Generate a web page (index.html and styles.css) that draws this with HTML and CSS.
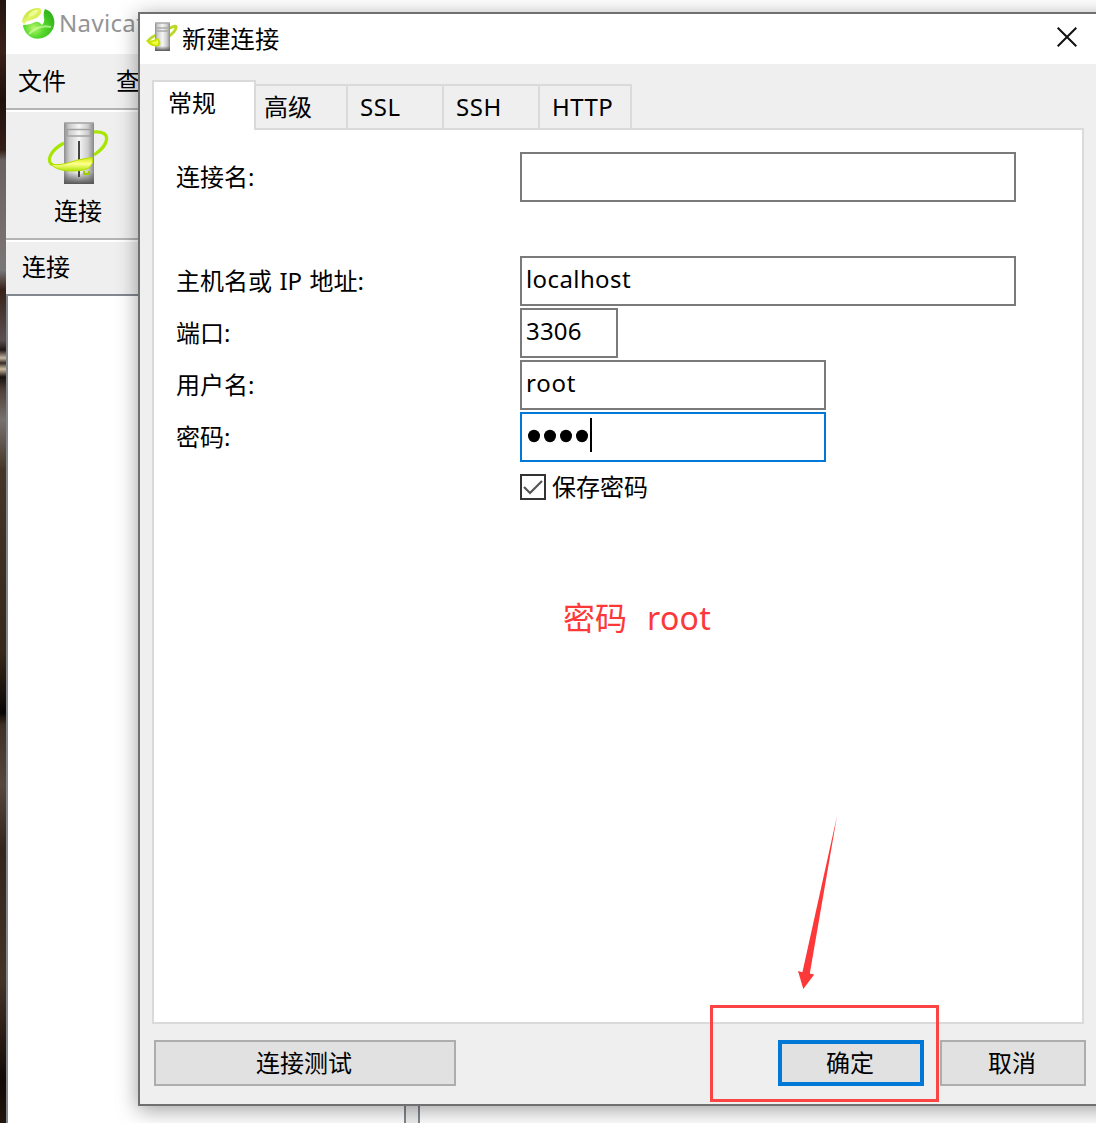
FILE: index.html
```html
<!DOCTYPE html>
<html lang="zh-CN">
<head>
<meta charset="utf-8">
<title>新建连接</title>
<link rel="stylesheet" href="styles.css">
</head>
<body>
<div class="desktop">
  <div class="wallpaper"></div>
  <main class="main-window">
    <header class="main-title">
      <svg width="34" height="34" viewBox="0 0 34 34">
        <defs>
          <radialGradient id="leaf" cx=".35" cy=".65" r=".7"><stop offset="0" stop-color="#b9f56a"/><stop offset=".45" stop-color="#55d92c"/><stop offset="1" stop-color="#32b41c"/></radialGradient>
          <linearGradient id="lime" x2="1" y2="1"><stop stop-color="#a4d60b"/><stop offset=".5" stop-color="#e4f56a"/><stop offset="1" stop-color="#b5e315"/></linearGradient>
        </defs>
        <path d="M1 16C2 8 9 1 19 2q2 2 1 5Q18 12 10 14 5 15 3 18Z" fill="url(#lime)"/>
        <path d="M24 3C34 6 36 19 30 26 24 34 12 35 6 28Q2 23 2 19q7 0 12-3 4-1 7 3 3-3 2-7-1-5 1-9Z" fill="url(#leaf)"/>
        <path d="M8 28q10-10 22-7" fill="none" stroke="#d9ffb0" stroke-width="2.2" opacity=".6"/>
        <path d="M8 8q5-5 9-4-1 5-9 7Z" fill="#f4ffad" opacity=".7"/>
      </svg>
      <span>Navicat</span>
    </header>
    <nav class="menu"><span>文件</span><span>查看</span></nav>
    <section class="toolbar">
      <div class="tool">
        <svg width="64" height="64" viewBox="0 0 64 64">
          <defs>
            <linearGradient id="metal"><stop stop-color="#8d8d8d"/><stop offset=".17" stop-color="#ccc"/><stop offset=".5" stop-color="#f5f5f5"/><stop offset=".8" stop-color="#ccc"/><stop offset="1" stop-color="#888"/></linearGradient>
            <linearGradient id="foot" x2="0" y2="1"><stop stop-color="#555" stop-opacity="0"/><stop offset="1" stop-color="#555"/></linearGradient>
            <linearGradient id="band" x2="0" y2="1"><stop stop-color="#d2e900"/><stop offset=".5" stop-color="#ffff91"/><stop offset="1" stop-color="#aee400"/></linearGradient>
          </defs>
          <path d="M46 10C66 8 62 23 47 33M17 21C2 29-1 40 6 43" fill="none" stroke="#a7e600" stroke-width="3.2"/>
          <path d="M17 1h30v61H17Z" fill="url(#metal)"/>
          <path d="M17 50h30v12H17Z" fill="url(#foot)"/>
          <path d="M17 1h30M20 7.5h24M20 14h24M20 7v7M44 7v7" stroke="#a2a2a2" stroke-width="1.6"/>
          <path d="M32 19v36" stroke="#444" stroke-width="2"/>
          <path d="M4 42q8 2 20-2 5-2 12-3 6-1 9-2 2 6-2 10-4 4-18 4Q9 49 4 42" fill="url(#band)" stroke="#b1df00"/>
          <path d="M37 49v3h5v-3M42 51v2" fill="none" stroke="#9ccc00" stroke-width="2"/>
        </svg>
        <span>连接</span>
      </div>
    </section>
    <section class="side-heading">连接</section>
    <section class="panes"><div class="tree"></div><div class="splitter"></div><div class="content"></div></section>
  </main>

  <section class="dialog">
    <header class="dialog-title">
      <svg width="32" height="32" viewBox="0 0 32 32">
        <path d="M22 7q9-5 8-1-1 4-8 9M10 13q-8 4-8 7" fill="none" stroke="#bcd829" stroke-width="3"/>
        <path d="M9 1h15v28H9Z" fill="url(#metal)"/><path d="M9 24h15v5H9Z" fill="url(#foot)"/>
        <path d="M9 1h15M11 6h11M11 9h11" stroke="#aaa" stroke-width="1.3"/>
        <path d="M0 18q6 2 11-2l2 1q3 5 0 7-9 2-13-6" fill="#c9e200"/><path d="M5 20q4 0 7-2 1 5-2 5-3 0-5-3" fill="#f2fb3c"/>
      </svg>
      <h1>新建连接</h1>
      <svg class="close" width="20" height="20" viewBox="0 0 20 20"><path d="M.7.7 19.3 19.3M19.3.7.7 19.3" stroke="#111" stroke-width="2"/></svg>
    </header>
    <div class="dialog-body">
      <nav class="tabs">
        <span class="tab active">常规</span><span class="tab advanced">高级</span><span class="tab">SSL</span><span class="tab">SSH</span><span class="tab http">HTTP</span>
      </nav>
      <div class="panel">
        <div class="row name-row"><span class="label">连接名:</span><div class="field"></div></div>
        <div class="row"><span class="label host">主机名或 IP 地址:</span><div class="field">localhost</div></div>
        <div class="row"><span class="label">端口:</span><div class="field port">3306</div></div>
        <div class="row"><span class="label">用户名:</span><div class="field medium">root</div></div>
        <div class="row"><span class="label">密码:</span><div class="field medium focused"><svg width="64" height="14" viewBox="0 0 64 14"><g fill="#000"><ellipse cx="8" cy="7" rx="6" ry="6.2"/><ellipse cx="24" cy="7" rx="6" ry="6.2"/><ellipse cx="40" cy="7" rx="6" ry="6.2"/><ellipse cx="56" cy="7" rx="6" ry="6.2"/></g></svg><i class="caret"></i></div></div>
        <div class="save"><span class="checkbox"><svg width="22" height="22" viewBox="0 0 22 22"><path d="m2 11 6 6L20 5" fill="none" stroke="#555" stroke-width="2.2"/></svg></span><span>保存密码</span></div>
      </div>
      <footer class="actions"><span class="button test">连接测试</span><span class="button ok">确定</span><span class="button">取消</span></footer>
    </div>
  </section>

  <div class="note"><span>密码</span><span class="note-value">root</span></div>
  <svg class="arrow" width="64" height="180" viewBox="0 0 64 180"><path d="M57 6 29.8 163.4l4.4 1.2L23.3 179 18 161l4.4 1.3Z" fill="#fd3838"/></svg>
  <div class="highlight"></div>
</div>
</body>
</html>
```
FILE: styles.css
```css
* { box-sizing: border-box; }
body { margin: 0; overflow: hidden; color: #000; font: 24px/32px "Noto Sans", "Noto Sans CJK SC", sans-serif; }
svg { display: block; flex: none; }
.desktop { position: relative; width: 1096px; height: 1123px; overflow: hidden; display: flex; }
.wallpaper { width: 6px; flex: none; background: linear-gradient(#24140f 0, #3a2219 50px, #20100c 100px, #352018 150px, #69615f 160px, #77706f 240px, #777 270px, #382118 290px, #5b5051 340px, #211715 350px, #c7b8a2 358px, #352a22 363px, #cfbda0 369px, #17110e 377px, #4f4036 390px, #77716e 420px, #443526 470px, #37291a 650px, #1c130c 690px, #090503 713px, #3e3024 725px, #55473c 785px, #33251b 850px, #443427 980px, #130905 1080px, #21140d 1123px); }
.main-window { flex: 1; display: flex; flex-direction: column; background: #fff; }
.main-title { display: flex; height: 54px; gap: 4px; padding: 6px 0 0 15px; color: #949494; line-height: 34px; letter-spacing: .35px; }
.menu { display: flex; gap: 50px; height: 56px; padding: 11px 0 0 12px; background: #efefef; border-bottom: 2px solid #b4b4b4; }
.toolbar { height: 130px; border-top: 2px solid #fff; border-bottom: 2px solid #b4b4b4; background: #efefef; padding: 10px 0 0 40px; }
.tool { display: flex; flex-direction: column; align-items: center; width: 64px; gap: 9px; }
.tool svg { margin-left: 2px; }
.side-heading { height: 56px; padding: 9px 16px; background: #efefef; border-top: 2px solid #fff; border-bottom: 2px solid #828790; }
.panes { flex: 1; display: flex; border-left: 2px solid #828790; }
.tree { width: 396px; }
.splitter { width: 16px; background: #efefef; border: solid #828790; border-width: 0 2px; }
.content { flex: 1; }

.dialog { position: absolute; left: 138px; top: 12px; width: 978px; height: 1094px; border: 2px solid #707070; background: #efefef; box-shadow: 0 4px 20px rgba(0,0,0,.38); }
.dialog-title { height: 50px; display: flex; align-items: flex-start; padding: 8px 28px 0 6px; background: #fff; }
.dialog-title h1 { margin: 1px auto 0 4px; font-size: 24.3px; font-weight: 400; }
.close { margin: 5px 9px 0 0; }
.dialog-body { padding: 16px 0 0 12px; }
.tabs { display: flex; align-items: flex-end; height: 50px; }
.tab { width: 96px; height: 46px; padding: 5px 0 0 12px; border: 2px solid #dadada; border-left: 0; letter-spacing: .6px; }
.tab.active { width: 104px; height: 50px; padding: 5px 0 0 14px; background: #fff; border-left: 2px solid #dadada; border-bottom: 0; letter-spacing: 0; }
.tab.advanced { width: 92px; padding-left: 8px; letter-spacing: 0; }
.tab.http { width: 92px; letter-spacing: .4px; }
.panel { width: 932px; height: 896px; margin-top: -2px; padding: 22px 0 0 22px; border: 2px solid #dadada; background: #fff; }
.tabs { position: relative; }
.row { display: flex; height: 50px; margin-bottom: 2px; }
.name-row { margin-bottom: 54px; }
.label { width: 344px; padding-top: 9px; }
.host { word-spacing: 1.2px; }
.field { width: 496px; border: 2px solid #7a7a7a; padding: 5px 4px; letter-spacing: .4px; }
.port { width: 98px; letter-spacing: .2px; }
.medium { width: 306px; letter-spacing: .8px; }
.focused { display: flex; align-items: center; border-color: #0078d7; padding: 0 4px; }
.focused svg { margin-top: -2px; }
.caret { width: 2px; height: 34px; margin-top: -4px; background: #000; }
.save { display: flex; align-items: center; gap: 6px; margin: 9px 0 0 344px; }
.checkbox { width: 26px; height: 26px; border: 2px solid #333; }
.actions { display: flex; gap: 16px; padding: 16px 0 0 2px; }
.button { width: 146px; height: 46px; display: flex; align-items: center; justify-content: center; padding-right: 2px; border: 2px solid #adadad; background: #e1e1e1; }
.test { width: 302px; margin-right: 306px; }
.ok { border: 4px solid #0078d7; }

.note { position: absolute; left: 563px; top: 597px; display: flex; gap: 20px; color: #fd3838; font-size: 32px; line-height: 42px; }
.note-value { letter-spacing: .3px; }
.arrow { position: absolute; left: 780px; top: 810px; }
.highlight { position: absolute; left: 710px; top: 1005px; width: 229px; height: 97px; border: 3px solid #fb4545; }
```
